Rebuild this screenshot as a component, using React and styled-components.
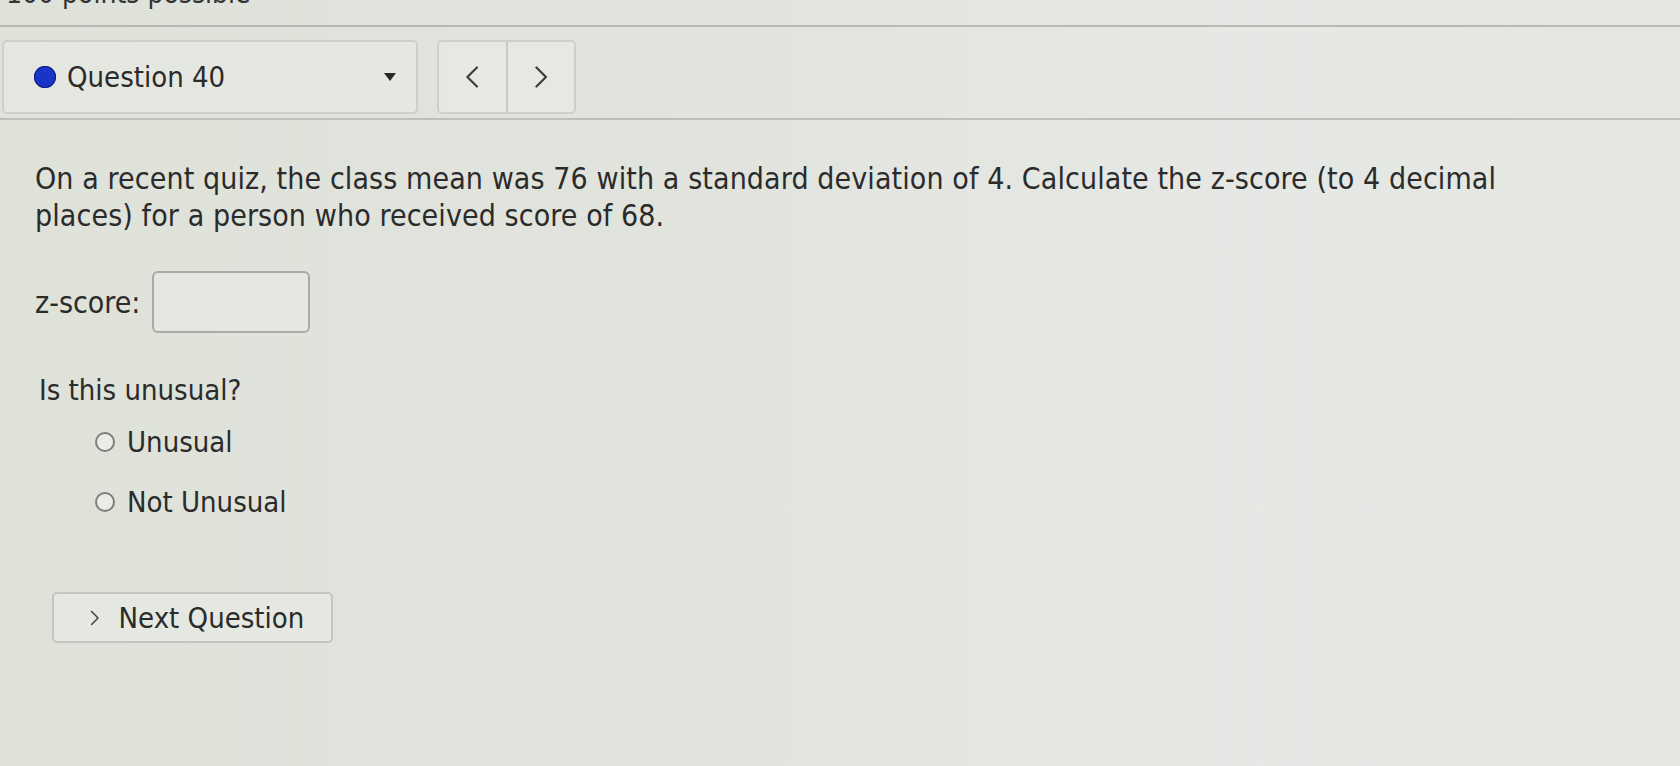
import React from 'react';
import styled, { createGlobalStyle } from 'styled-components';

const GlobalStyle = createGlobalStyle`
  html, body {
    margin: 0;
    padding: 0;
  }
  body {
    background: linear-gradient(90deg, #dee2d9 0%, #e1e4dd 40%, #e6e8e5 75%, #e3e6e1 100%);
    font-family: "DejaVu Sans Condensed", "DejaVu Sans", sans-serif;
    color: #2b2b2b;
    min-height: 766px;
    overflow: hidden;
  }
`;

const Page = styled.div`
  width: 1680px;
  min-height: 766px;
`;

/* only the bottom of the points line peeks out above the nav bar */
const PointsLine = styled.div`
  height: 25px;
  overflow: hidden;
  border-bottom: 2px solid #b7b9b5;
  padding-left: 6px;
  font-size: 28px;
  line-height: 28px;
  color: #333;

  span {
    display: block;
    margin-top: -20px;
  }
`;

const NavBar = styled.div`
  display: flex;
  align-items: center;
  gap: 19px;
  padding: 13px 0 4px 2px;
  border-bottom: 2px solid #bdbfbb;
`;

const QuestionSelect = styled.div`
  box-sizing: border-box;
  width: 416px;
  height: 74px;
  border: 2px solid #cdcfca;
  border-radius: 5px;
  background: rgba(240, 241, 238, 0.35);
  display: flex;
  align-items: center;
  padding: 0 18px 0 30px;
  font-size: 29px;
  color: #2b2b2b;
`;

const StatusDot = styled.span`
  width: 22px;
  height: 22px;
  border-radius: 50%;
  background: #1a34c7;
  box-shadow: 0 0 0 1px #102080 inset;
  margin-right: 11px;
  flex-shrink: 0;
`;

const SelectLabel = styled.span`
  flex: 1;
`;

const Caret = styled.span`
  width: 0;
  height: 0;
  border-left: 6px solid transparent;
  border-right: 6px solid transparent;
  border-top: 8px solid #2a2a2a;
  margin-right: 2px;
`;

const NavGroup = styled.div`
  box-sizing: border-box;
  display: flex;
  width: 139px;
  height: 74px;
  border: 2px solid #cdcfca;
  border-radius: 5px;
  background: rgba(240, 241, 238, 0.35);
`;

const NavButton = styled.button`
  flex: 1;
  border: none;
  border-left: ${p => (p.$divided ? '2px solid #c6c8c3' : 'none')};
  background: transparent;
  display: flex;
  align-items: center;
  justify-content: center;
  padding: 0;
  color: #444;
`;

const Content = styled.div`
  padding: 40px 0 0 35px;
`;

const QuestionText = styled.p`
  margin: 0;
  width: 1520px;
  font-size: 30px;
  line-height: 37px;
  letter-spacing: 0.1px;
  color: #2b2b2b;
`;

const AnswerRow = styled.div`
  display: flex;
  align-items: center;
  gap: 12px;
  margin-top: 37px;
  font-size: 30px;
`;

const AnswerInput = styled.input`
  box-sizing: border-box;
  width: 158px;
  height: 62px;
  border: 2px solid #a9aba7;
  border-radius: 6px;
  background: rgba(238, 240, 236, 0.4);
`;

const Prompt = styled.div`
  margin: 40px 0 0 4px;
  font-size: 29px;
  line-height: 34px;
`;

const ChoiceList = styled.div`
  display: flex;
  flex-direction: column;
  gap: 26px;
  margin: 18px 0 0 60px;
`;

const Choice = styled.label`
  display: flex;
  align-items: center;
  gap: 12px;
  font-size: 29px;
  line-height: 34px;
`;

const RadioCircle = styled.span`
  box-sizing: border-box;
  width: 20px;
  height: 20px;
  border-radius: 50%;
  border: 2px solid #7d7f7c;
  background: rgba(245, 246, 244, 0.5);
`;

const NextButton = styled.button`
  box-sizing: border-box;
  display: flex;
  align-items: center;
  gap: 19px;
  width: 281px;
  height: 51px;
  margin: 73px 0 0 17px;
  padding: 0 0 0 36px;
  border: 2px solid #c3c5c0;
  border-radius: 5px;
  background: rgba(238, 240, 236, 0.45);
  font-family: inherit;
  font-size: 29px;
  color: #2b2b2b;
`;

const Chevron = ({ dir = 'right', size = 20 }) => (
  <svg width={size * 0.6} height={size} viewBox="0 0 12 20" fill="none">
    <path
      d={dir === 'left' ? 'M10 2 L2 10 L10 18' : 'M2 2 L10 10 L2 18'}
      stroke="#3c3c3c"
      strokeWidth="1.8"
      strokeLinecap="round"
      strokeLinejoin="round"
    />
  </svg>
);

export default function App() {
  return (
    <>
      <GlobalStyle />
      <Page>
        <PointsLine>
          <span>100 points possible</span>
        </PointsLine>

        <NavBar>
          <QuestionSelect>
            <StatusDot />
            <SelectLabel>Question 40</SelectLabel>
            <Caret />
          </QuestionSelect>
          <NavGroup>
            <NavButton aria-label="Previous question">
              <Chevron dir="left" size={24} />
            </NavButton>
            <NavButton $divided aria-label="Next question">
              <Chevron dir="right" size={24} />
            </NavButton>
          </NavGroup>
        </NavBar>

        <Content>
          <QuestionText>
            On a recent quiz, the class mean was 76 with a standard deviation of 4. Calculate the
            z-score (to 4 decimal places) for a person who received score of 68.
          </QuestionText>

          <AnswerRow>
            <span>z-score:</span>
            <AnswerInput type="text" />
          </AnswerRow>

          <Prompt>Is this unusual?</Prompt>
          <ChoiceList>
            <Choice>
              <RadioCircle />
              Unusual
            </Choice>
            <Choice>
              <RadioCircle />
              Not Unusual
            </Choice>
          </ChoiceList>

          <NextButton>
            <Chevron dir="right" size={16} />
            Next Question
          </NextButton>
        </Content>
      </Page>
    </>
  );
}
